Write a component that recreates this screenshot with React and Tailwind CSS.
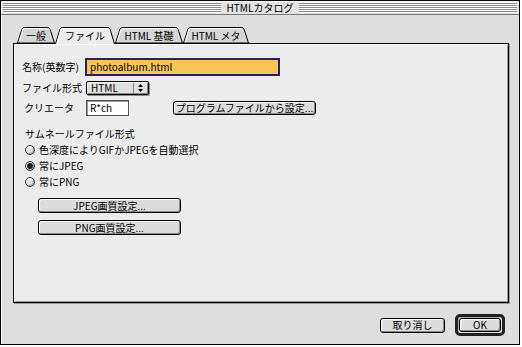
import React from "react";

function Tab({ w, label, selected }) {
  const h = selected ? 17 : 16;
  const d = `M0.5,${h} L5,2 Q5.6,0.5 7.5,0.5 L${w - 7.5},0.5 Q${w - 5.6},0.5 ${w - 5},2 L${w - 0.5},${h}`;
  return (
    <div
      className={
        "relative flex items-center justify-center " +
        (selected ? "z-10 -mb-[1px] h-[17px]" : "h-[16px]")
      }
      style={{ width: w }}
    >
      <svg className="absolute inset-0" width={w} height={h}>
        <path
          d={d + (selected ? "" : " Z")}
          fill={selected ? "#ececec" : "#d6d6d6"}
          stroke="#000"
          strokeWidth="1"
        />
        <path
          d={`M2,${h - 1} L5.8,3 Q6.3,1.5 8,1.5 L${w - 8},1.5`}
          fill="none"
          stroke="#fff"
          strokeWidth="1"
        />
      </svg>
      <span className={"relative pt-[1px] " + (selected ? "-mt-[1px]" : "")}>{label}</span>
    </div>
  );
}

function Button({ className, children }) {
  return (
    <div
      className={
        "flex items-center justify-center rounded-[3px] border border-black bg-[#dcdcdc] shadow-[inset_1px_1px_0_#ffffff,inset_-1px_-1px_0_#8a8a8a] " +
        className
      }
    >
      {children}
    </div>
  );
}

function Radio({ checked, label }) {
  return (
    <div className="flex h-[12px] items-center">
      <div className="ml-[1px] flex h-[10px] w-[10px] items-center justify-center rounded-full border border-[#333] bg-[#e4e4e4] shadow-[inset_1px_1px_0_#ffffff,inset_-1px_-1px_0_#a0a0a0]">
        {checked && <div className="h-[6px] w-[6px] rounded-full bg-[#222]" />}
      </div>
      <span className="ml-[4px]">{label}</span>
    </div>
  );
}

export default function App() {
  return (
    <div className="h-[347px] w-[522px] bg-white font-['Noto_Sans_CJK_JP','Noto_Sans',sans-serif] text-[10px] leading-none text-black">
      <div className="flex h-[345px] w-[520px] flex-col border border-black bg-[#dedede]">
        {/* Title bar */}
        <div className="flex h-[14px] items-center border-b border-[#7a7a7a] bg-[#e2e2e2] px-[2px] shadow-[inset_1px_1px_0_#ffffff]">
          <div className="h-[11px] flex-1 bg-[repeating-linear-gradient(180deg,#ffffff_0px,#ffffff_1px,#8c8c8c_1px,#8c8c8c_2px)]" />
          <div className="px-[6px] text-[10px]">HTMLカタログ</div>
          <div className="h-[11px] flex-1 bg-[repeating-linear-gradient(180deg,#ffffff_0px,#ffffff_1px,#8c8c8c_1px,#8c8c8c_2px)]" />
        </div>

        {/* Body */}
        <div className="flex flex-1 flex-col pl-[12px] pt-[12px] shadow-[inset_1px_0_0_#ffffff]">
          {/* Tabs */}
          <div className="ml-[4px] flex items-end">
            <Tab w={38} label="一般" />
            <Tab w={60} label="ファイル" selected />
            <Tab w={68} label="HTML 基礎" />
            <Tab w={66} label="HTML メタ" />
          </div>

          {/* Panel */}
          <div className="flex h-[260px] w-[496px] flex-col border border-black bg-[#ececec] pl-[8px] pt-[14px] shadow-[inset_1px_1px_0_#ffffff,inset_-1px_-1px_0_#9a9a9a,1px_1px_0_#9a9a9a]">
            <div className="flex h-[18px] items-center">
              <div className="w-[63px]">名称(英数字)</div>
              <div className="flex h-[18px] w-[195px] items-center border-2 border-[#24245c] bg-[#f9c456] pl-[3px]">
                photoalbum.html
              </div>
            </div>

            <div className="mt-[5px] flex h-[14px] items-center">
              <div className="w-[64px]">ファイル形式</div>
              <div className="flex h-[14px] w-[63px] items-center rounded-[2px] border border-black bg-[#e0e0e0] pl-[4px] shadow-[inset_1px_1px_0_#ffffff,inset_-1px_-1px_0_#8a8a8a,1px_1px_0_#8a8a8a]">
                <span className="flex-1">HTML</span>
                <svg width="14" height="12" viewBox="0 0 14 12" className="mr-[1px]">
                  <line x1="0.5" y1="1" x2="0.5" y2="11" stroke="#8a8a8a" />
                  <path d="M5,5 L7.5,2 L10,5 Z" fill="#000" />
                  <path d="M5,7 L7.5,10 L10,7 Z" fill="#000" />
                </svg>
              </div>
            </div>

            <div className="mt-[5px] flex h-[16px] items-center">
              <div className="w-[64px] pl-[2px]">クリエータ</div>
              <div className="flex h-[16px] w-[43px] items-center border border-[#555] bg-white pl-[3px] shadow-[inset_1px_1px_0_#9a9a9a]">
                R*ch
              </div>
              <Button className="ml-[44px] h-[14px] w-[143px]">プログラムファイルから設定...</Button>
            </div>

            <div className="mt-[13px] pl-[3px]">サムネールファイル形式</div>

            <div className="mt-[5px] flex flex-col gap-[4px] pl-[2px]">
              <Radio label="色深度によりGIFかJPEGを自動選択" />
              <Radio checked label="常にJPEG" />
              <Radio label="常にPNG" />
            </div>

            <Button className="ml-[16px] mt-[10px] h-[15px] w-[143px]">JPEG画質設定...</Button>
            <Button className="ml-[16px] mt-[7px] h-[15px] w-[143px]">PNG画質設定...</Button>
          </div>

          {/* Bottom buttons */}
          <div className="mt-[11px] flex w-[496px] items-center justify-end pr-[4px]">
            <Button className="h-[15px] w-[65px]">取り消し</Button>
            <div className="ml-[10px] flex h-[22px] w-[50px] items-center justify-center rounded-[5px] border-[3px] border-[#222] bg-[#dedede] shadow-[inset_1px_1px_0_#aaaaaa]">
              <Button className="h-[14px] w-[42px]">OK</Button>
            </div>
          </div>
        </div>
      </div>
    </div>
  );
}
